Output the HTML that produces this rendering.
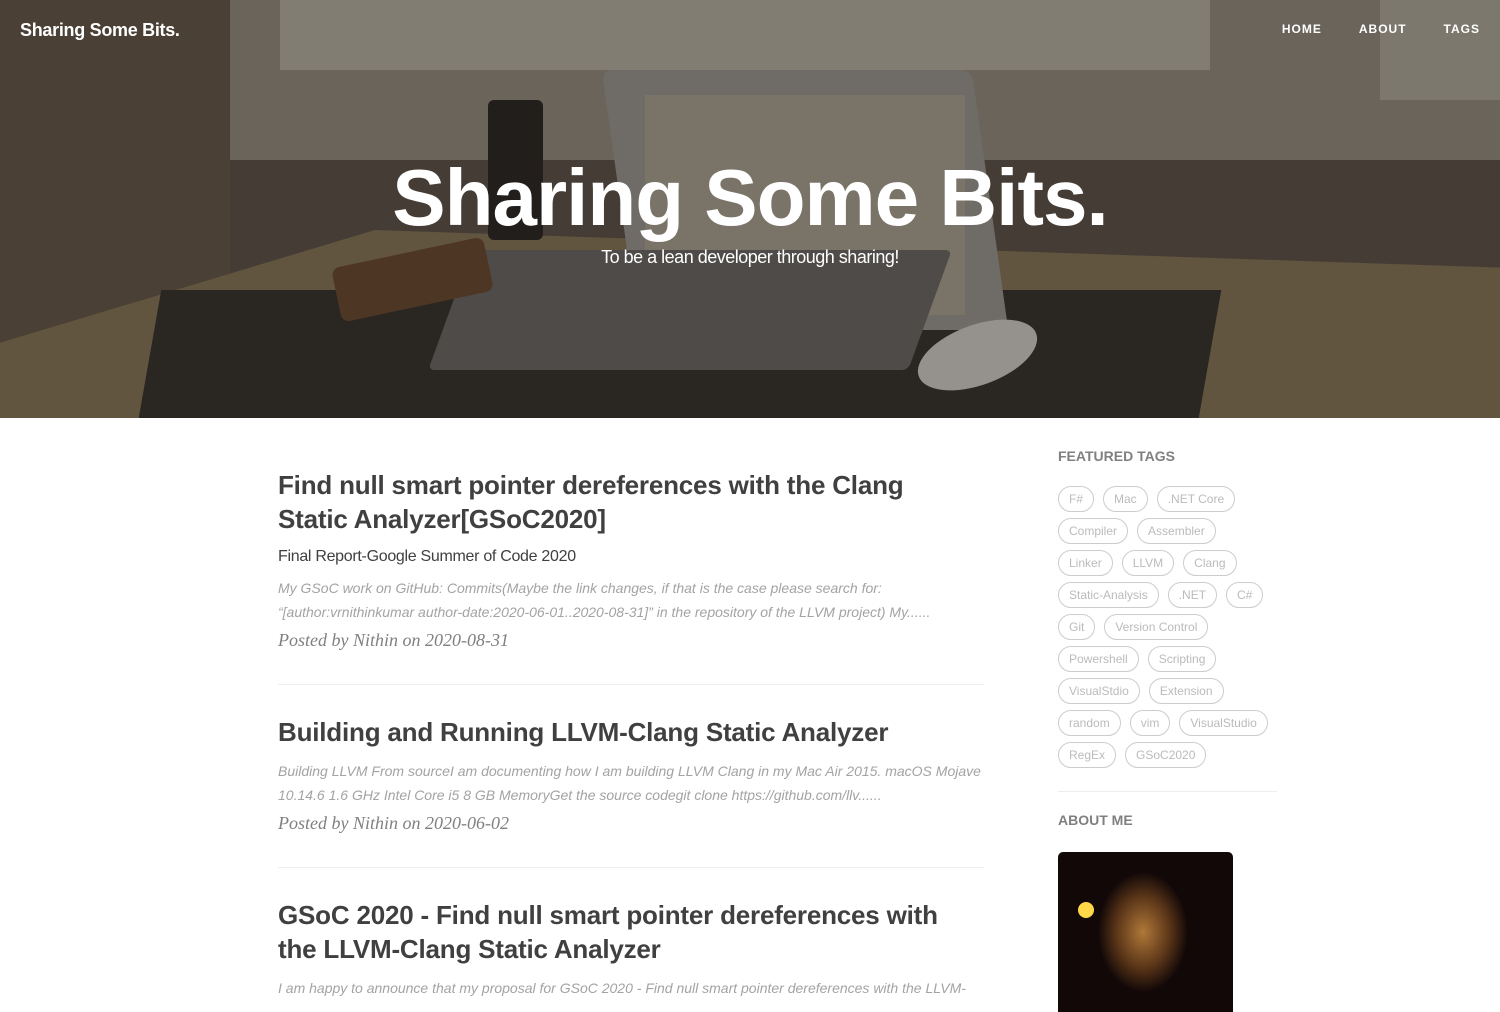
<!DOCTYPE html>
<html><head><meta charset="utf-8"><style>
*{margin:0;padding:0;box-sizing:border-box}
body{width:1500px;height:1000px;overflow:hidden;background:#fff;font-family:"Liberation Sans",Arial,sans-serif;color:#404040}
.hero{position:absolute;left:0;top:0;width:1500px;height:418px;background:#453d35;overflow:hidden}
.hero div{position:absolute}
.nav{position:absolute;top:0;left:0;width:1500px;height:60px;z-index:5;color:#fff}
.brand{position:absolute;left:20px;top:20px;font-size:18px;font-weight:bold;letter-spacing:-0.3px}
.links{position:absolute;right:20px;top:22px;font-size:12px;font-weight:bold;letter-spacing:1px}
.links span{margin-left:37px}
.ht{position:absolute;top:152px;left:0;width:1500px;text-align:center;color:#fff;font-size:80px;font-weight:bold;letter-spacing:-1px;z-index:5}
.hs{position:absolute;top:247px;left:0;width:1500px;text-align:center;color:#fff;font-size:18px;font-weight:300;z-index:5;letter-spacing:-0.5px}
.main{position:absolute;left:278px;top:418px;width:706px}
.post{border-bottom:1px solid #eee}
.post h2{font-size:26px;line-height:34px;font-weight:bold;color:#404040;letter-spacing:-0.2px;max-width:680px}
.post h3{font-size:16px;font-weight:normal;margin-top:12px;color:#404040;letter-spacing:-0.3px}
.post p{font-size:14px;font-style:italic;color:#a3a3a3;line-height:24px;margin-top:10px}
.post .meta{font-family:"Liberation Serif",serif;font-style:italic;font-size:18px;color:#808080;margin-top:6px}
.side{position:absolute;left:1058px;top:418px;width:219px}
.side h5{font-size:14px;font-weight:bold;color:#808080;margin-top:30px}
.tags{margin-top:22px;font-size:12px}
.tags span{display:inline-block;height:26px;line-height:24px;padding:0 10px;border:1px solid #ccc;border-radius:13px;color:#bbb;margin:0 9px 6px 0}
</style></head><body>
<div class="hero">
 <div style="left:230px;top:0;width:1270px;height:160px;background:#6a645a"></div>
 <div style="left:280px;top:0;width:930px;height:70px;background:#827d73"></div>
 <div style="left:1380px;top:0;width:120px;height:100px;background:#7d786e"></div>
 <div style="left:0;top:0;width:230px;height:418px;background:#4a4036"></div>
 <div style="left:0;top:230px;width:1500px;height:188px;background:#62553f;clip-path:polygon(25% 0,100% 20%,100% 100%,0 100%,0 60%)"></div>
 <div style="left:150px;top:290px;width:1060px;height:128px;background:#2a2622;transform:skewX(-10deg)"></div>
 <div style="left:620px;top:70px;width:370px;height:260px;background:#6f6b66;border-radius:10px;transform:skewX(8deg)"></div>
 <div style="left:645px;top:95px;width:320px;height:220px;background:#7a7468"></div>
 <div style="left:450px;top:250px;width:480px;height:120px;background:#4e4b48;transform:skewX(-20deg);border-radius:6px"></div>
 <div style="left:488px;top:100px;width:55px;height:140px;background:#221e1b;border-radius:6px"></div>
 <div style="left:335px;top:252px;width:155px;height:55px;background:#4e3625;border-radius:8px;transform:rotate(-12deg)"></div>
 <div style="left:915px;top:325px;width:125px;height:60px;background:#95918c;border-radius:50%;transform:rotate(-20deg)"></div>
</div>
<div class="nav"><div class="brand">Sharing Some Bits.</div><div class="links"><span>HOME</span><span>ABOUT</span><span>TAGS</span></div></div>
<div class="ht">Sharing Some Bits.</div>
<div class="hs">To be a lean developer through sharing!</div>
<div class="main">
 <div class="post" style="padding-top:50px;height:267px">
  <h2>Find null smart pointer dereferences with the Clang Static Analyzer[GSoC2020]</h2>
  <h3>Final Report-Google Summer of Code 2020</h3>
  <p>My GSoC work on GitHub: Commits(Maybe the link changes, if that is the case please search for: “[author:vrnithinkumar author-date:2020-06-01..2020-08-31]” in the repository of the LLVM project) My......</p>
  <div class="meta">Posted by Nithin on 2020-08-31</div>
 </div>
 <div class="post" style="padding-top:30px;height:183px">
  <h2>Building and Running LLVM-Clang Static Analyzer</h2>
  <p>Building LLVM From sourceI am documenting how I am building LLVM Clang in my Mac Air 2015. macOS Mojave 10.14.6 1.6 GHz Intel Core i5 8 GB MemoryGet the source codegit clone https://github.com/llv......</p>
  <div class="meta">Posted by Nithin on 2020-06-02</div>
 </div>
 <div class="post" style="padding-top:30px;border:none">
  <h2>GSoC 2020 - Find null smart pointer dereferences with the LLVM-Clang Static Analyzer</h2>
  <p>I am happy to announce that my proposal for GSoC 2020 - Find null smart pointer dereferences with the LLVM-</p>
 </div>
</div>
<div class="side">
 <h5>FEATURED TAGS</h5>
 <div class="tags"><span>F#</span><span>Mac</span><span>.NET Core</span><span>Compiler</span><span>Assembler</span><span>Linker</span><span>LLVM</span><span>Clang</span><span>Static-Analysis</span><span>.NET</span><span>C#</span><span>Git</span><span>Version Control</span><span>Powershell</span><span>Scripting</span><span>VisualStdio</span><span>Extension</span><span>random</span><span>vim</span><span>VisualStudio</span><span>RegEx</span><span>GSoC2020</span></div>
 <div style="border-top:1px solid #eee;margin-top:17px"></div>
 <h5 style="margin-top:20px">ABOUT ME</h5>
 <div style="margin-top:24px;width:175px;height:160px;border-radius:5px 5px 0 0;background:radial-gradient(ellipse 45px 60px at 85px 80px,#b07838,#5a3518 60%,#120808 100%)"><div style="position:relative;left:20px;top:50px;width:16px;height:16px;border-radius:50%;background:#ffd84a"></div></div>
</div>
</body></html>
